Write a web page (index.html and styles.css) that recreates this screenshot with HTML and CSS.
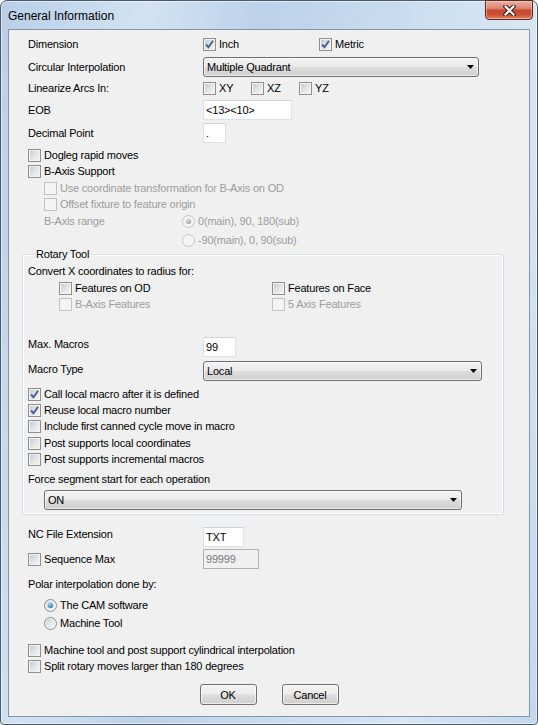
FILE: index.html
```html
<!DOCTYPE html>
<html>
<head>
<meta charset="utf-8">
<title>General Information</title>
<link rel="stylesheet" href="styles.css">
</head>
<body>
<div class="window">
  <div class="titlebar">
    <span class="title">General Information</span>
    <span class="close"><svg width="13" height="11" viewBox="0 0 13 11"><path d="M2.5 1.5 L10.5 9.5 M10.5 1.5 L2.5 9.5" stroke="#3b1e18" stroke-width="4.2" stroke-linecap="square"/><path d="M2.5 1.5 L10.5 9.5 M10.5 1.5 L2.5 9.5" stroke="#ffffff" stroke-width="2.2" stroke-linecap="square"/></svg></span>
  </div>
  <div class="client">
    <div class="row mt7">
      <span class="lbl">Dimension</span>
      <span class="opt w116"><span class="cb"><svg class="chk" width="9" height="9" viewBox="0 0 9 9"><path d="M1 4.5 L3.5 7.2 L8 0.8" fill="none" stroke="#4a5e98" stroke-width="1.9"/></svg></span>Inch</span>
      <span class="opt"><span class="cb"><svg class="chk" width="9" height="9" viewBox="0 0 9 9"><path d="M1 4.5 L3.5 7.2 L8 0.8" fill="none" stroke="#4a5e98" stroke-width="1.9"/></svg></span>Metric</span>
    </div>
    <div class="row tall mt6">
      <span class="lbl">Circular Interpolation</span>
      <span class="combo w276"><span class="combo-text">Multiple Quadrant</span><svg width="7" height="4" viewBox="0 0 7 4"><path d="M0 0 H7 L3.5 4 Z" fill="#000"/></svg></span>
    </div>
    <div class="row mt4">
      <span class="lbl">Linearize Arcs In:</span>
      <span class="opt w48"><span class="cb"></span>XY</span>
      <span class="opt w48"><span class="cb"></span>XZ</span>
      <span class="opt"><span class="cb"></span>YZ</span>
    </div>
    <div class="row tall mt5">
      <span class="lbl">EOB</span>
      <span class="edit w89">&lt;13&gt;&lt;10&gt;</span>
    </div>
    <div class="row tall mt3">
      <span class="lbl">Decimal Point</span>
      <span class="edit w23">.</span>
    </div>
    <div class="row mt5">
      <span class="opt"><span class="cb"></span>Dogleg rapid moves</span>
    </div>
    <div class="row mt2">
      <span class="opt"><span class="cb"></span>B-Axis Support</span>
    </div>
    <div class="row mt3 ind16">
      <span class="opt dis-t"><span class="cb dis"></span>Use coordinate transformation for B-Axis on OD</span>
    </div>
    <div class="row mt2 ind16">
      <span class="opt dis-t"><span class="cb dis"></span>Offset fixture to feature origin</span>
    </div>
    <div class="row mt3 ind16">
      <span class="lbl w138 dis-t">B-Axis range</span>
      <span class="opt dis-t"><span class="rb dis on"></span>0(main), 90, 180(sub)</span>
    </div>
    <div class="row mt5 ind154">
      <span class="opt dis-t"><span class="rb dis"></span>-90(main), 0, 90(sub)</span>
    </div>

    <fieldset class="group">
      <legend class="group-title">Rotary Tool</legend>
      <div class="row mt3">
        <span>Convert X coordinates to radius for:</span>
      </div>
      <div class="row mt3 ind31">
        <span class="opt w213"><span class="cb"></span>Features on OD</span>
        <span class="opt"><span class="cb"></span>Features on Face</span>
      </div>
      <div class="row mt2 ind31">
        <span class="opt w213 dis-t"><span class="cb dis"></span>B-Axis Features</span>
        <span class="opt dis-t"><span class="cb dis"></span>5 Axis Features</span>
      </div>
      <div class="row tall top mt26">
        <span class="lbl">Max. Macros</span>
        <span class="edit w33">99</span>
      </div>
      <div class="row tall top mt4">
        <span class="lbl lbl-low">Macro Type</span>
        <span class="combo w279"><span class="combo-text">Local</span><svg width="7" height="4" viewBox="0 0 7 4"><path d="M0 0 H7 L3.5 4 Z" fill="#000"/></svg></span>
      </div>
      <div class="row mt6">
        <span class="opt"><span class="cb"><svg class="chk" width="9" height="9" viewBox="0 0 9 9"><path d="M1 4.5 L3.5 7.2 L8 0.8" fill="none" stroke="#4a5e98" stroke-width="1.9"/></svg></span>Call local macro after it is defined</span>
      </div>
      <div class="row mt2">
        <span class="opt"><span class="cb"><svg class="chk" width="9" height="9" viewBox="0 0 9 9"><path d="M1 4.5 L3.5 7.2 L8 0.8" fill="none" stroke="#4a5e98" stroke-width="1.9"/></svg></span>Reuse local macro number</span>
      </div>
      <div class="row mt2">
        <span class="opt"><span class="cb"></span>Include first canned cycle move in macro</span>
      </div>
      <div class="row mt3">
        <span class="opt"><span class="cb"></span>Post supports local coordinates</span>
      </div>
      <div class="row mt2">
        <span class="opt"><span class="cb"></span>Post supports incremental macros</span>
      </div>
      <div class="row mt6">
        <span>Force segment start for each operation</span>
      </div>
      <div class="row tall mt4 ind16">
        <span class="combo w418"><span class="combo-text">ON</span><svg width="7" height="4" viewBox="0 0 7 4"><path d="M0 0 H7 L3.5 4 Z" fill="#000"/></svg></span>
      </div>
    </fieldset>

    <div class="row tall top mt12">
      <span class="lbl">NC File Extension</span>
      <span class="edit w41">TXT</span>
    </div>
    <div class="row tall mt2">
      <span class="opt lbl"><span class="cb"></span>Sequence Max</span>
      <span class="edit w56 edit-dis">99999</span>
    </div>
    <div class="row mt8">
      <span>Polar interpolation done by:</span>
    </div>
    <div class="row mt7 ind16">
      <span class="opt"><span class="rb on"></span>The CAM software</span>
    </div>
    <div class="row mt4 ind16">
      <span class="opt"><span class="rb"></span>Machine Tool</span>
    </div>
    <div class="row mt13">
      <span class="opt"><span class="cb"></span>Machine tool and post support cylindrical interpolation</span>
    </div>
    <div class="row mt2">
      <span class="opt"><span class="cb"></span>Split rotary moves larger than 180 degrees</span>
    </div>
    <div class="buttons">
      <span class="btn">OK</span>
      <span class="btn">Cancel</span>
    </div>
  </div>
</div>
</body>
</html>
```

FILE: styles.css
```css
* { box-sizing: border-box; }
html, body { margin: 0; padding: 0; }
body {
  width: 538px;
  height: 725px;
  overflow: hidden;
  background: #ffffff;
  font-family: "Liberation Sans", Arial, sans-serif;
  font-size: 11px;
  letter-spacing: -0.2px;
  color: #000;
}
.window {
  width: 538px;
  height: 725px;
  border: 1px solid #48596e;
  border-radius: 7px 7px 4px 4px;
  background: linear-gradient(100deg, #b8cfe8 0%, #d2e2f2 22%, #bcd2ea 40%, #c9dcef 60%, #d8e6f4 80%, #c3d8ed 100%);
  box-shadow: inset 0 0 0 1px rgba(255,255,255,0.55);
  display: flex;
  flex-direction: column;
}
.titlebar {
  height: 28px;
  flex: none;
  display: flex;
  padding: 0 4px 0 7px;
}
.title {
  align-self: center;
  font-size: 12px;
  letter-spacing: 0;
  margin-top: 1px;
  color: #000;
}
.close {
  margin-left: auto;
  margin-top: -1px;
  width: 48px;
  height: 20px;
  border: 1px solid #5a2b22;
  border-radius: 0 0 4px 4px;
  background: linear-gradient(#eab0a2 0%, #dd8672 40%, #c8482f 52%, #cc5238 78%, #e58a6c 100%);
  box-shadow: inset 0 0 0 1px rgba(255,220,210,0.45);
  display: flex;
  align-items: center;
  justify-content: center;
}
.client {
  flex: 1;
  margin: 0 7px 7px 7px;
  border: 1px solid #8494a9;
  background: #f0f0f0;
  padding: 0 0 0 19px;
  display: flex;
  flex-direction: column;
}
.row {
  display: flex;
  align-items: center;
  height: 14px;
  flex: none;
  white-space: nowrap;
  line-height: 14px;
}
.row.tall { height: 20px; }
.row.top { align-items: flex-start; }
.lbl { width: 175px; flex: none; line-height: 14px; }
.lbl-low { margin-top: 1px; }
.w138 { width: 138px; }
.ind16 { padding-left: 16px; }
.ind31 { padding-left: 31px; }
.ind154 { padding-left: 154px; }
.mt1 { margin-top: 1px; }
.mt2 { margin-top: 2px; }
.mt3 { margin-top: 3px; }
.mt4 { margin-top: 4px; }
.mt5 { margin-top: 5px; }
.mt6 { margin-top: 6px; }
.mt7 { margin-top: 7px; }
.mt8 { margin-top: 8px; }
.mt12 { margin-top: 12px; }
.mt13 { margin-top: 13px; }
.mt26 { margin-top: 26px; }

.opt { display: flex; align-items: center; flex: none; }
.w116 { width: 116px; }
.w48 { width: 48px; }
.w213 { width: 213px; }
.dis-t { color: #9d9d9d; }

.cb {
  width: 13px;
  height: 13px;
  flex: none;
  margin-right: 3px;
  border: 1px solid #8e8f8f;
  background: linear-gradient(135deg, #c2c7cd 0%, #e4e6e9 55%, #f7f7f7 100%);
  box-shadow: inset 0 0 0 1px #f3f3f3;
  display: flex;
  align-items: center;
  justify-content: center;
}
.cb.dis {
  border-color: #c2c2c2;
  background: #f4f4f4;
  box-shadow: none;
}
.chk { display: block; }

.rb {
  width: 13px;
  height: 13px;
  flex: none;
  margin-right: 3px;
  border-radius: 50%;
  border: 1px solid #8e8f8f;
  background: linear-gradient(135deg, #c3c7cc 0%, #e8e9eb 55%, #fafafa 100%);
  box-shadow: inset 0 0 0 1px #f4f4f4;
  display: flex;
  align-items: center;
  justify-content: center;
}
.rb.on::after {
  content: "";
  width: 5px;
  height: 5px;
  border-radius: 50%;
  background: radial-gradient(circle at 40% 35%, #a6e0fb 0%, #3d93cf 50%, #1a4f86 100%);
}
.rb.dis {
  border-color: #c5c5c5;
  background: #f4f4f4;
  box-shadow: none;
}
.rb.dis.on::after {
  background: radial-gradient(circle at 40% 35%, #e6e6e6 0%, #a9a9a9 60%, #8a8a8a 100%);
}

.combo {
  height: 20px;
  flex: none;
  border: 1px solid #707070;
  border-radius: 3px;
  background: linear-gradient(#f3f3f3 0%, #ebebeb 48%, #dddddd 52%, #cfcfcf 100%);
  box-shadow: inset 0 0 0 1px rgba(255,255,255,0.55);
  display: flex;
  align-items: center;
  padding: 0 4px 0 3px;
}
.combo-text { flex: 1; }
.w276 { width: 276px; }
.w279 { width: 279px; }
.w418 { width: 418px; }

.edit {
  height: 20px;
  flex: none;
  background: #fff;
  border: 1px solid #dde1e7;
  border-top-color: #cfd3da;
  padding-left: 2px;
  display: flex;
  align-items: center;
}
.edit-dis {
  background: #f0f0f0;
  border-color: #adb2b5;
  color: #7a7a7a;
}
.w89 { width: 89px; }
.w23 { width: 23px; }
.w33 { width: 33px; }
.w41 { width: 41px; }
.w56 { width: 56px; }

.group {
  margin: 1px 0 0 -6px;
  padding: 0 0 4px 5px;
  width: 482px;
  border: 1px solid #d5dfe5;
  border-radius: 3px;
  box-shadow: inset 0 0 0 1px #ffffff;
  min-inline-size: 0;
  flex: none;
}
.group-title {
  padding: 0 2px;
  margin-left: 6px;
  line-height: 13px;
  height: 13px;
}

.buttons {
  display: flex;
  justify-content: center;
  gap: 25px;
  margin: 11px 0 0 -19px;
  flex: none;
}
.btn {
  width: 57px;
  height: 21px;
  border: 1px solid #707070;
  border-radius: 3px;
  background: linear-gradient(#f3f3f3 0%, #ebebeb 48%, #dddddd 52%, #cfcfcf 100%);
  box-shadow: inset 0 0 0 1px rgba(255,255,255,0.6);
  display: flex;
  align-items: center;
  justify-content: center;
}
```
